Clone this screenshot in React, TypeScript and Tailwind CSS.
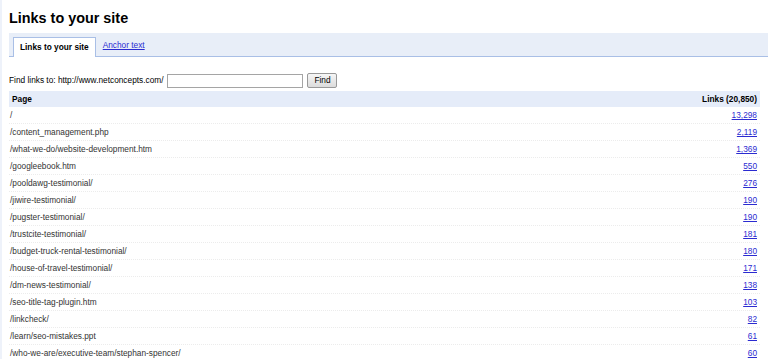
import React from "react";

interface Row {
  page: string;
  links: string;
}

const rows: Row[] = [
  { page: "/", links: "13,298" },
  { page: "/content_management.php", links: "2,119" },
  { page: "/what-we-do/website-development.htm", links: "1,369" },
  { page: "/googleebook.htm", links: "550" },
  { page: "/pooldawg-testimonial/", links: "276" },
  { page: "/jiwire-testimonial/", links: "190" },
  { page: "/pugster-testimonial/", links: "190" },
  { page: "/trustcite-testimonial/", links: "181" },
  { page: "/budget-truck-rental-testimonial/", links: "180" },
  { page: "/house-of-travel-testimonial/", links: "171" },
  { page: "/dm-news-testimonial/", links: "138" },
  { page: "/seo-title-tag-plugin.htm", links: "103" },
  { page: "/linkcheck/", links: "82" },
  { page: "/learn/seo-mistakes.ppt", links: "61" },
  { page: "/who-we-are/executive-team/stephan-spencer/", links: "60" },
];

export default function App() {
  return (
    <div className="w-[770px] h-[359px] overflow-hidden bg-white font-['Liberation_Sans',Arial,sans-serif] text-[8.3px] text-[#333]">
      <div className="h-full border-l-2 border-[#eef2fa] pl-[7px] pr-[2px]">
        <h1 className="pt-[9px] text-[14.4px] font-bold leading-[18px] text-black">Links to your site</h1>

        {/* tabs */}
        <div className="mt-[6px] flex h-[24px] items-end border-b border-[#a9bfe6] bg-[#e8eef8] pl-[4px]">
          <div className="-mb-px flex h-[20px] items-center border border-b-0 border-[#a9bfe6] bg-white px-[6px] font-bold text-black">
            Links to your site
          </div>
          <a href="#" className="mb-[5px] ml-[7px] text-[#2b2bd1] underline">
            Anchor text
          </a>
        </div>

        {/* search */}
        <div className="mt-[16px] flex h-[15px] items-center text-black">
          <span>Find links to: http://www.netconcepts.com/</span>
          <input className="ml-[4px] h-[14px] w-[136px] border border-[#a5a5a5] bg-white outline-none" />
          <button className="ml-[4px] h-[15px] w-[30px] rounded-[2px] border border-[#999] bg-gradient-to-b from-[#f6f6f6] to-[#dcdcdc] text-[8.3px] leading-none text-black">
            Find
          </button>
        </div>

        {/* table */}
        <div className="mt-[3px] w-[751px]">
          <div className="flex h-[16px] items-center justify-between bg-[#e5ecf9] pl-[3px] pr-[3px] font-bold text-black">
            <span>Page</span>
            <span>Links (20,850)</span>
          </div>
          {rows.map((r) => (
            <div
              key={r.page}
              className="flex h-[17px] items-center justify-between border-b border-dotted border-[#ececec] pl-[1px] pr-[3px]"
            >
              <span>{r.page}</span>
              <a href="#" className="text-[#2b2bd1] underline">
                {r.links}
              </a>
            </div>
          ))}
        </div>
      </div>
    </div>
  );
}
